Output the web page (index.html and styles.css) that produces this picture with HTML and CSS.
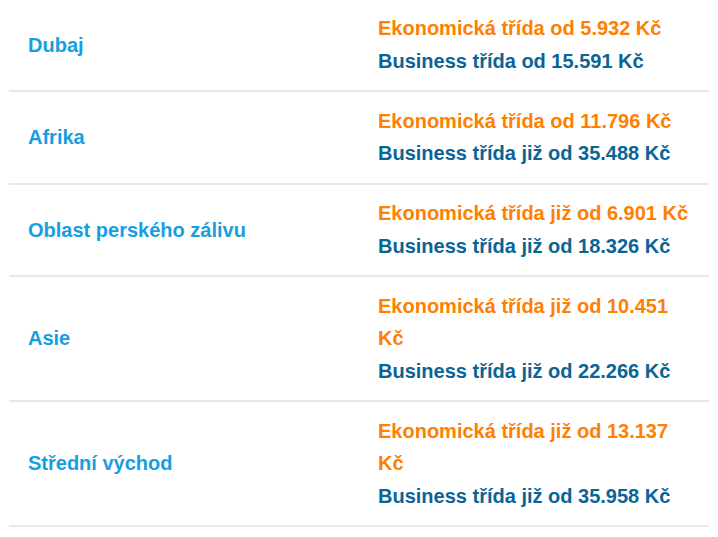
FILE: index.html
```html
<!DOCTYPE html>
<html lang="cs">
<head>
<meta charset="utf-8">
<link rel="stylesheet" href="styles.css">
</head>
<body>
<div class="fares">
  <div class="row">
    <div class="dest">Dubaj</div>
    <div class="prices">
      <div class="eco">Ekonomická třída od 5.932 Kč</div>
      <div class="biz">Business třída od 15.591 Kč</div>
    </div>
  </div>
  <div class="row">
    <div class="dest">Afrika</div>
    <div class="prices">
      <div class="eco">Ekonomická třída od 11.796 Kč</div>
      <div class="biz">Business třída již od 35.488 Kč</div>
    </div>
  </div>
  <div class="row">
    <div class="dest">Oblast perského zálivu</div>
    <div class="prices">
      <div class="eco">Ekonomická třída již od 6.901 Kč</div>
      <div class="biz">Business třída již od 18.326 Kč</div>
    </div>
  </div>
  <div class="row">
    <div class="dest">Asie</div>
    <div class="prices">
      <div class="eco">Ekonomická třída již od 10.451 Kč</div>
      <div class="biz">Business třída již od 22.266 Kč</div>
    </div>
  </div>
  <div class="row">
    <div class="dest">Střední východ</div>
    <div class="prices">
      <div class="eco">Ekonomická třída již od 13.137 Kč</div>
      <div class="biz">Business třída již od 35.958 Kč</div>
    </div>
  </div>
</div>
</body>
</html>
```
FILE: styles.css
```css
html, body {
  margin: 0;
  padding: 0;
  background: #ffffff;
}
body {
  font-family: "Liberation Sans", Arial, sans-serif;
  font-weight: bold;
  font-size: 20px;
  line-height: 32.5px;
}
.fares {
  width: 700px;
  margin: -0.5px 0 0 9px;
}
.row {
  display: grid;
  grid-template-columns: 1fr 1fr;
  align-items: center;
  border-bottom: 2px solid #e8e8e8;
}
.dest, .prices {
  padding: 12.75px 19px;
}
.dest {
  color: #169ee0;
}
.eco {
  color: #ff7f00;
}
.biz {
  color: #0a6496;
}
```
